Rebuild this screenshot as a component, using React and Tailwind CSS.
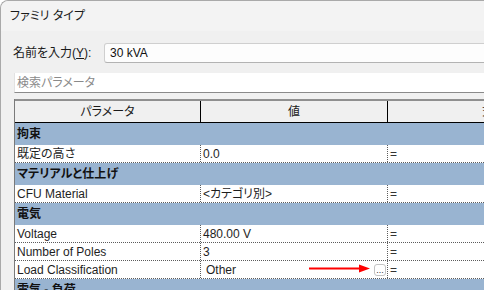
const jp = "font-['Liberation_Sans','Noto_Sans_CJK_JP',sans-serif] [font-feature-settings:'palt']";

function GroupRow({ label }) {
  return (
    <div className="h-[22px] bg-[#99b4d1] flex items-center pl-[2px] text-[12px] font-bold text-[#111]">
      {label}
    </div>
  );
}

function DataRow({ label, value, children }) {
  return (
    <div className="h-[18px] flex border-b border-dotted border-[#5c5c5c] bg-white text-[12px] text-[#1e1e1e]">
      <div className="w-[186px] shrink-0 border-r border-dotted border-[#5c5c5c] flex items-center pl-[2px]">{label}</div>
      <div className="w-[187px] shrink-0 border-r border-dotted border-[#5c5c5c] flex items-center pl-[2px] relative">
        {children ?? value}
      </div>
      <div className="w-[200px] shrink-0 flex items-center pl-[2px] text-[#333]">=</div>
    </div>
  );
}

export default function App() {
  return (
    <div className={`w-[484px] h-[290px] overflow-hidden bg-white ${jp}`}>
      <div className="w-[560px] h-[340px] rounded-tl-lg border-l border-t border-[#a9a9a9] bg-[#f0f0f0]">
        <div className="h-[30px] bg-[#f3f3f3] flex items-center pl-[9px] text-[12px] text-[#1a1a1a] rounded-tl-lg">
          ファミリ タイプ
        </div>

        <div className="pt-[12px]">
          <div className="flex items-center pl-[12px]">
            <span className="w-[91px] text-[12px] text-[#1a1a1a]">
              名前を入力(<span className="underline">Y</span>):
            </span>
            <div className="flex-1 h-[20px] border border-[#cfcfcf] border-b-[#b3b3b3] rounded-[3px] bg-[#fdfdfd] flex items-center pl-[5px] text-[12px] text-[#111]">
              30 kVA
            </div>
          </div>

          <div className="ml-[13px] mt-[10px] h-[20px] bg-white border-l border-[#e2e2e2] border-b border-b-[#8a8a8a] flex items-center pl-[2px] text-[12px] text-[#8a8a8a]">
            検索パラメータ
          </div>

          <div className="ml-[13px] mt-[6px] border-l border-[#7a7a7a]">
            <div className="h-[24px] flex border-t-2 border-t-[#8f8f8f] border-b border-b-black bg-[#f0f0f0] text-[12px] text-[#1a1a1a]">
              <div className="w-[186px] shrink-0 border-r border-black flex items-center justify-center">パラメータ</div>
              <div className="w-[187px] shrink-0 border-r border-black flex items-center justify-center">値</div>
              <div className="w-[200px] shrink-0 flex items-center justify-center">式</div>
            </div>

            <GroupRow label="拘束" />
            <DataRow label="既定の高さ" value="0.0" />
            <GroupRow label="マテリアルと仕上げ" />
            <DataRow label="CFU Material" value="<カテゴリ別>" />
            <GroupRow label="電気" />
            <DataRow label="Voltage" value="480.00 V" />
            <DataRow label="Number of Poles" value="3" />
            <DataRow label="Load Classification">
              <span className="pl-[3px]">Other</span>
              <div className="ml-auto mr-[1px] w-[12px] h-[12px] rounded-[3px] border border-[#c4c4c4] flex items-end justify-center text-[9px] leading-[9px] text-[#333]">
                ...
              </div>
              <svg className="absolute left-[108px] top-[3px]" width="62" height="9" viewBox="0 0 62 9">
                <rect x="0" y="3.5" width="52" height="2" fill="#ff0000" />
                <polygon points="50,0.5 61,4.5 50,8.5" fill="#ff0000" />
              </svg>
            </DataRow>
            <GroupRow label="電気 - 負荷" />
          </div>
        </div>
      </div>
    </div>
  );
}
